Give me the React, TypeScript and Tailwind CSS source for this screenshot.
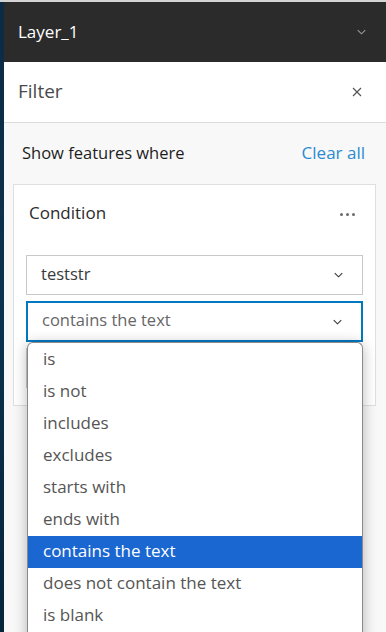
import React from "react";

const Chevron = ({ className }: { className?: string }) => (
  <svg viewBox="0 0 12 8" className={className} fill="none" stroke="currentColor" strokeWidth="1.4">
    <path d="M1 1.5 L6 6.5 L11 1.5" />
  </svg>
);

const items = [
  "is",
  "is not",
  "includes",
  "excludes",
  "starts with",
  "ends with",
  "contains the text",
  "does not contain the text",
  "is blank",
];

export default function App() {
  return (
    <div
      className="relative flex h-[632px] w-[386px] flex-col overflow-hidden bg-[#f8f8f8]"
      style={{ fontFamily: '"Open Sans", "Noto Sans", sans-serif' }}
    >
      <div className="h-[2px] w-full bg-[#d4d4d4]" />
      <div className="flex flex-1">
        <div className="w-[4px] bg-gradient-to-b from-[#0c2a44] via-[#0a3250] to-[#06243a]" />
        <div className="flex flex-1 flex-col">
          <div className="flex h-[60px] items-center justify-between bg-[#2b2b2b] pl-[14px] pr-[19px]">
            <span className="pb-[1px] text-[17px] text-white">Layer_1</span>
            <Chevron className="h-[6px] w-[11px] text-[#9a9a9a]" />
          </div>
          <div className="flex h-[61px] items-center justify-between border-b border-[#dcdcdc] bg-white pl-[14px] pr-[24px]">
            <span className="pb-[2px] text-[19px] text-[#4a4a4a]">Filter</span>
            <svg viewBox="0 0 10 10" className="h-[10px] w-[10px] text-[#555]" stroke="currentColor" strokeWidth="1.2">
              <path d="M1 1 L9 9 M9 1 L1 9" />
            </svg>
          </div>
          <div className="flex flex-1 flex-col bg-[#f8f8f8] pl-[9px] pr-[10px]">
            <div className="flex h-[61px] items-center justify-between pl-[9px] pr-[11px]">
              <span className="pb-[1px] text-[16.5px] font-medium text-[#1e1e1e]">Show features where</span>
              <span className="pb-[1px] text-[17px] text-[#2b8ad0]">Clear all</span>
            </div>
            <div className="flex flex-col border border-[#dfdfdf] bg-white px-[12px] pb-[17px]">
              <div className="flex h-[58px] items-center justify-between pl-[3px] pr-[8px]">
                <span className="pb-[2px] text-[17px] text-[#2b2b2b]">Condition</span>
                <div className="flex gap-[3px]">
                  <span className="h-[3px] w-[3px] rounded-full bg-[#6a6a6a]" />
                  <span className="h-[3px] w-[3px] rounded-full bg-[#6a6a6a]" />
                  <span className="h-[3px] w-[3px] rounded-full bg-[#6a6a6a]" />
                </div>
              </div>
              <div className="mt-[12px] flex h-[40px] items-center justify-between border border-[#c8c8c8] bg-white pl-[14px] pr-[18px]">
                <span className="pb-[2px] text-[16.5px] text-[#3a3a3a]">teststr</span>
                <Chevron className="h-[6px] w-[11px] text-[#333]" />
              </div>
              <div className="relative mt-[6px]">
                <div className="flex h-[41px] items-center justify-between border-2 border-[#0079c1] bg-white pl-[14px] pr-[18px]">
                  <span className="pb-[2px] text-[16.5px] text-[#666]">contains the text</span>
                  <Chevron className="h-[6px] w-[11px] text-[#333]" />
                </div>
                <div className="mt-[6px] h-[40px] border border-[#c8c8c8]" />
                <div className="absolute left-[1px] right-0 top-[41px] z-10 rounded-t-[6px] border border-b-0 border-[#8a8a8a] bg-white pt-[1px] shadow-[0_2px_14px_rgba(0,0,0,0.28)]">
                  {items.map((it) => (
                    <div
                      key={it}
                      className={
                        "flex h-[32px] items-center pb-[3px] pl-[15px] text-[17px] " +
                        (it === "contains the text" ? "bg-[#1a67d2] text-white" : "text-[#555]")
                      }
                    >
                      {it}
                    </div>
                  ))}
                  <div className="h-[40px]" />
                </div>
              </div>
            </div>
          </div>
        </div>
      </div>
    </div>
  );
}
